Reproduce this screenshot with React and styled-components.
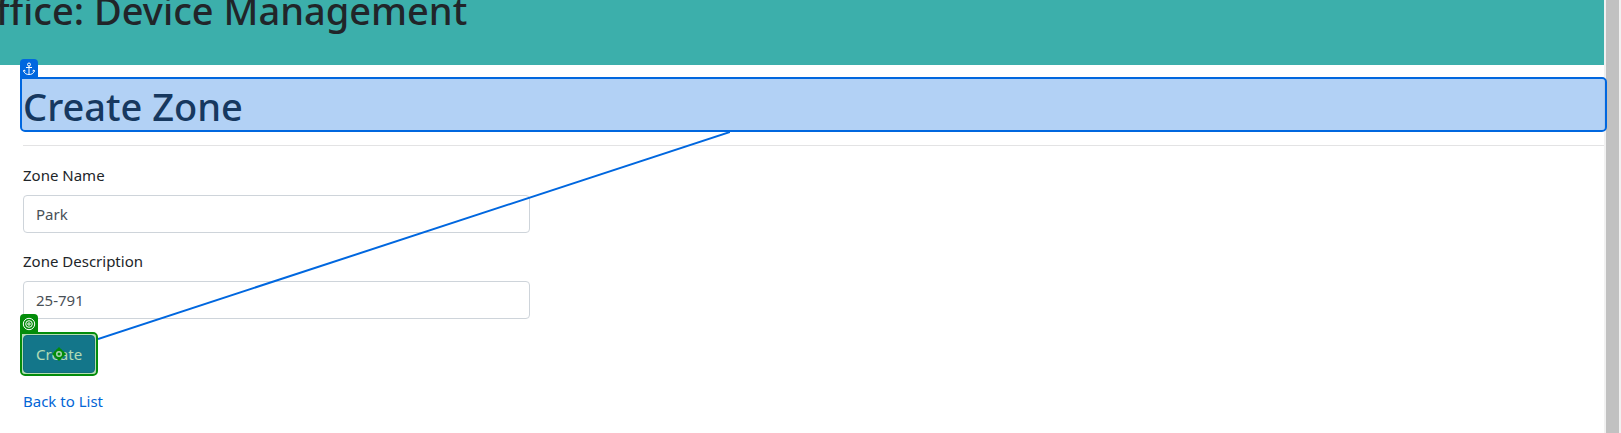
import React from "react";
import styled, { createGlobalStyle } from "styled-components";

const BLUE = "#0067df";
const GREEN = "#038c0a";

const GlobalStyle = createGlobalStyle`
  *, *::before, *::after { box-sizing: border-box; }
  body {
    margin: 0;
    background: #fff;
    color: #212529;
    font: 400 15px/24px "Segoe UI", "Noto Sans", sans-serif;
  }
`;

const Page = styled.div`
  display: flex;
  min-height: 100vh;
  overflow: hidden;
`;

const Content = styled.div`
  flex: 1;
  min-width: 0;
`;

const ScrollTrack = styled.div`
  flex: none;
  width: 17px;
  padding: 0 2px;
  display: flex;
  background: #f1f1f1;
`;

const ScrollThumb = styled.div`
  flex: 1;
  background: #c1c1c1;
`;

const Banner = styled.header`
  height: 65px;
  display: flex;
  align-items: flex-start;
  background: #3cafab;
`;

const Title = styled.h1`
  margin: -14px 0 0 -4px;
  font-size: 38px;
  line-height: 48px;
  font-weight: 500;
  white-space: nowrap;
`;

const Main = styled.main`
  position: relative;
  padding: 15px 0 16px 23px;
`;

const HeadingBox = styled.div`
  position: relative;
  padding-top: 3px;
`;

const Heading = styled.h1`
  margin: 0;
  font-size: 38px;
  line-height: 46px;
  font-weight: 500;
`;

const Highlight = styled.div`
  position: absolute;
  z-index: 1;
  inset: -3px;
  border: 2px solid ${(p) => p.$color};
  border-radius: 0 5px 5px 5px;
  background: ${(p) => p.$fill};
  background-clip: padding-box;
  pointer-events: none;
`;

const Tag = styled.div`
  position: absolute;
  left: -2px;
  bottom: 100%;
  width: 18px;
  height: 20px;
  display: flex;
  align-items: center;
  justify-content: center;
  border-radius: 4px 4px 0 0;
  background: ${(p) => p.$color};
`;

const Divider = styled.hr`
  margin: 16px 0 17px;
  border: 0;
  border-top: 1px solid #e3e3e4;
`;

const Form = styled.form`
  display: flex;
  flex-direction: column;
  align-items: flex-start;
  gap: 16px;
  width: calc(100% / 3 - 20px);
`;

const Field = styled.div`
  width: 100%;
  display: flex;
  flex-direction: column;
  gap: 8px;
`;

const Input = styled.input`
  width: 100%;
  height: 38px;
  padding: 6px 12px;
  border: 1px solid #ced4da;
  border-radius: 4px;
  background: #fff;
  color: #495057;
  font: inherit;
`;

const ButtonBox = styled.div`
  position: relative;
`;

const SubmitButton = styled.button`
  display: block;
  min-width: 72px;
  height: 38px;
  padding: 0 12px;
  border: 1px solid #1861ac;
  border-radius: 4px;
  background: #1b6ec2;
  color: #fff;
  font: inherit;
`;

const ClickPoint = styled.svg`
  position: absolute;
  left: 50%;
  top: 50%;
  transform: translate(-50%, -50%);
`;

const BackLink = styled.a`
  display: inline-block;
  margin-top: 16px;
  color: #0366d6;
  text-decoration: none;
`;

const Connector = styled.svg`
  position: absolute;
  left: 98px;
  top: 67px;
  pointer-events: none;
`;

function AnchorIcon() {
  return (
    <svg width="12" height="14" viewBox="0 0 12 14" fill="none" stroke="#fff" strokeWidth="1">
      <circle cx="6" cy="2.5" r="1.5" />
      <path d="M6 4v8.5M3 5.5h6M1 8v1.5c.5 2 2.5 3 5 3s4.500-1 5-3V8M.5 9.500L1.200 8l1.300 1M11.500 9.500L10.800 8l-1.300 1" />
    </svg>
  );
}

function TargetIcon() {
  return (
    <svg width="14" height="14" viewBox="0 0 14 14" fill="none" stroke="#fff" strokeWidth="1">
      <circle cx="7" cy="7" r="5.700" />
      <circle cx="7" cy="7" r="3.300" />
      <circle cx="7" cy="7" r="1.200" />
    </svg>
  );
}

export default function App() {
  return (
    <>
      <GlobalStyle />
      <Page>
        <Content>
          <Banner>
            <Title>ffice: Device Management</Title>
          </Banner>
          <Main>
            <HeadingBox>
              <Heading>Create Zone</Heading>
              <Highlight $color={BLUE} $fill="rgba(0, 103, 223, 0.3)">
                <Tag $color={BLUE}>
                  <AnchorIcon />
                </Tag>
              </Highlight>
            </HeadingBox>
            <Divider />
            <Form onSubmit={(e) => e.preventDefault()}>
              <Field>
                <label htmlFor="zone-name">Zone Name</label>
                <Input id="zone-name" type="text" defaultValue="Park" />
              </Field>
              <Field>
                <label htmlFor="zone-description">Zone Description</label>
                <Input id="zone-description" type="text" defaultValue="25-791" />
              </Field>
              <ButtonBox>
                <SubmitButton type="submit">Create</SubmitButton>
                <Highlight $color={GREEN} $fill="rgba(3, 140, 10, 0.3)">
                  <Tag $color={GREEN}>
                    <TargetIcon />
                  </Tag>
                  <ClickPoint width="14" height="14" viewBox="0 0 14 14">
                    <path d="M7 0l3 3H4zM7 14l3-3H4zM0 7l3-3v6zM14 7l-3-3v6z" fill={GREEN} />
                    <circle cx="7" cy="7" r="4" fill="#a9d3b4" stroke={GREEN} strokeWidth="2" />
                    <circle cx="7" cy="7" r="1.500" fill={GREEN} />
                  </ClickPoint>
                </Highlight>
              </ButtonBox>
            </Form>
            <BackLink href="#list">Back to List</BackLink>
            <Connector width="632" height="208" viewBox="0 0 632 208">
              <path d="M0 207L632 0" stroke={BLUE} strokeWidth="2" />
            </Connector>
          </Main>
        </Content>
        <ScrollTrack>
          <ScrollThumb />
        </ScrollTrack>
      </Page>
    </>
  );
}
